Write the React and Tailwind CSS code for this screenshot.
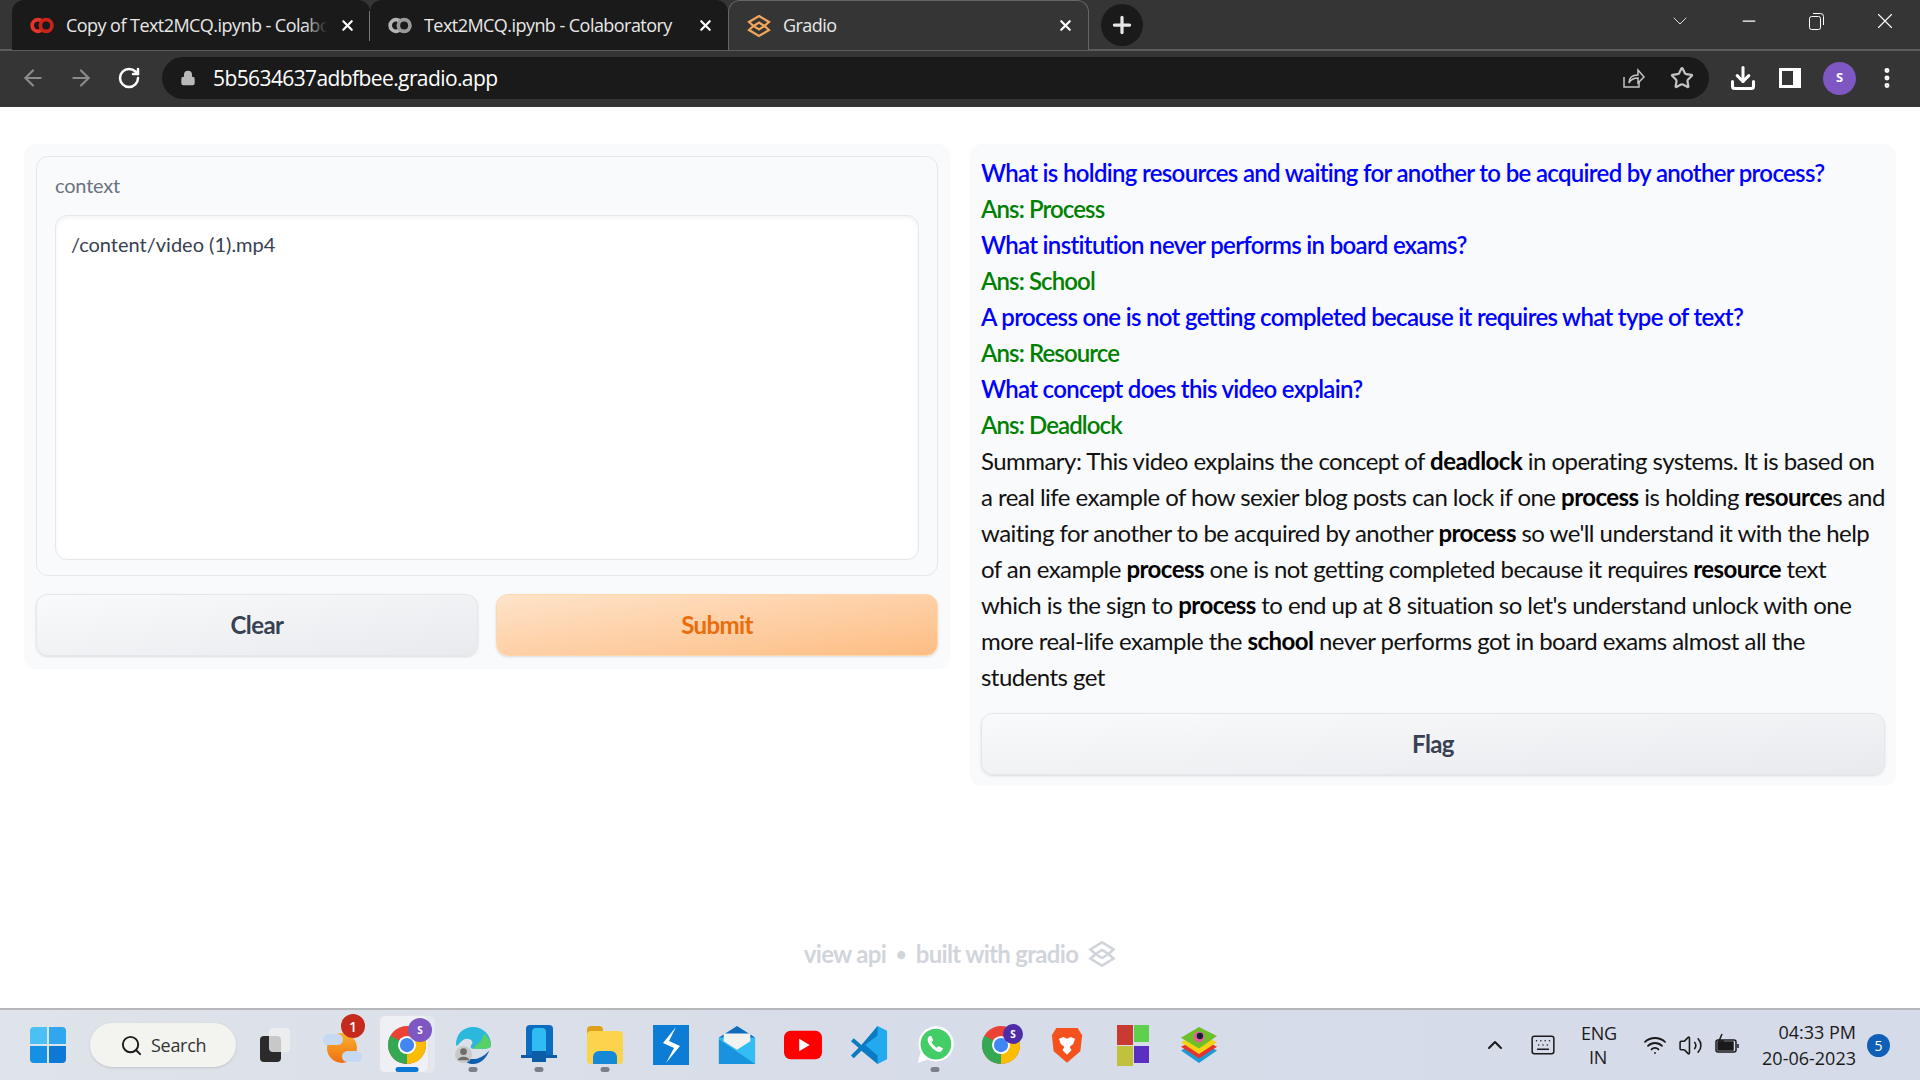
import React from "react";
import { ArrowLeft, ArrowRight, RotateCw, Lock, Star, Download, Plus, X, ChevronDown, Minus, ChevronUp, Wifi, Volume2, Keyboard, Search, MoreVertical } from "lucide-react";

const sans = "font-['Lato','Noto_Sans',sans-serif]";
const ui = "font-['Open_Sans','Noto_Sans',sans-serif]";

function ColabLogo({ color, dark }) {
  return (
    <svg width="26" height="17" viewBox="0 0 26 17" fill="none" strokeWidth="4">
      <path d="M13.500 4.500A6.300 6.300 0 1 0 13.500 12.500" stroke={color} />
      <circle cx="17.500" cy="8.500" r="6.300" stroke={dark} />
    </svg>
  );
}

function GradioLogo({ color, size = 24 }) {
  return (
    <svg width={size} height={size} viewBox="0 0 24 24" fill="none" stroke={color} strokeWidth="2.2" strokeLinejoin="miter">
      <path d="M12 2 22 8 17.500 12 22 16 12 22 2 16 6.500 12 2 8Z" />
      <path d="M12 8.500 17.500 12 12 15.500 6.500 12Z" />
    </svg>
  );
}

function Tab({ logo, title, active, divider, fade }) {
  return (
    <div className={`relative flex h-[50px] items-center pl-[18px] pr-[14px] gap-[12px] ${active ? "w-[361px] bg-[#353535] border border-b-0 border-[#666] rounded-t-xl" : "w-[358px] bg-[#1a1a1a] rounded-t-xl"}`}>
      <div className="w-[24px] flex justify-center shrink-0">{logo}</div>
      <div className={`relative flex-1 overflow-hidden whitespace-nowrap text-[18px] tracking-[-0.55px] text-[#e8e8e8] ${ui}`}>
        {title}
        {fade && <div className="absolute right-0 inset-y-0 w-[22px] bg-gradient-to-r from-transparent to-[#1a1a1a]" />}
      </div>
      <X size={17} strokeWidth={3} className="text-white shrink-0" />
      {divider && <div className="absolute right-0 top-[11px] h-[30px] w-px bg-[#777]" />}
    </div>
  );
}

function BrowserBar() {
  return (
    <header className="shrink-0 bg-[#353535] h-[107px]">
      <div className="flex items-start h-[51px] pl-[12px] border-b-2 border-[#5c5c5c]">
        <Tab title="Copy of Text2MCQ.ipynb - Colaboratory" logo={<ColabLogo color="#e8352a" dark="#c9231c" />} divider fade />
        <Tab title="Text2MCQ.ipynb - Colaboratory" logo={<ColabLogo color="#b4b4b4" dark="#9a9a9a" />} />
        <Tab title="Gradio" active logo={<GradioLogo color="#f2a65a" />} />
        <button className="ml-[12px] mt-[4px] w-[42px] h-[42px] rounded-full bg-[#1a1a1a] flex items-center justify-center">
          <Plus size={26} strokeWidth={3} className="text-[#e6e6e6]" />
        </button>
        <div className="ml-auto flex items-center h-[42px] text-white">
          <ChevronDown size={24} strokeWidth={1} className="text-[#ddd]" />
          <Minus size={20} strokeWidth={1.5} className="ml-[47px]" />
          <svg className="ml-[48px]" width="18" height="18" viewBox="0 0 18 18" fill="none" stroke="#fff" strokeWidth="1">
            <rect x="2.500" y="4.500" width="11" height="13" rx="2" />
            <path d="M6 1.500h7.500a3 3 0 0 1 3 3V13" />
          </svg>
          <X size={26} strokeWidth={1} className="ml-[47px] mr-[22px]" />
        </div>
      </div>
      <div className="flex items-center h-[54px] pl-[20px] pr-[20px]">
        <ArrowLeft size={26} strokeWidth={2} className="text-[#8b8b8b]" />
        <ArrowRight size={26} strokeWidth={2} className="ml-[22px] text-[#8b8b8b]" />
        <RotateCw size={24} strokeWidth={2.5} className="ml-[23px] text-white" />
        <div className="ml-[21px] flex-1 h-[42px] rounded-full bg-[#1a1a1a] flex items-center pl-[18px] pr-[15px]">
          <Lock size={16} fill="#b9b9b9" className="text-[#b9b9b9]" />
          <span className={`ml-[17px] text-[21px] tracking-[-0.6px] pt-[2px] text-white ${ui}`}>5b5634637adbfbee.gradio.app</span>
          <svg className="ml-auto" width="24" height="24" viewBox="0 0 24 24" fill="none" stroke="#c4c4c4" strokeWidth="1.5">
            <path d="M3 11v10h15v-5" />
            <path d="M8 17c0-5 3-8 9-8V4l6 7-6 6v-5c-4 0-7 1-9 5Z" />
          </svg>
          <Star size={24} strokeWidth={2.2} className="ml-[25px] text-[#c4c4c4]" />
        </div>
        <Download size={28} strokeWidth={2.6} className="ml-[20px] text-white" />
        <div className="ml-[22px] w-[22px] h-[20px] border-[3px] border-r-[8px] border-white" />
        <div className={`ml-[22px] w-[33px] h-[33px] rounded-full bg-[#7e57c2] text-white text-[13px] font-bold flex items-center justify-center ${ui}`}>S</div>
        <MoreVertical size={26} strokeWidth={2.6} className="ml-[18px] text-white" />
      </div>
    </header>
  );
}

function Btn({ children, tone }) {
  const tones = {
    gray: "bg-gradient-to-br from-[#f9fafb] to-[#e9eaee] border-[#e5e7eb] text-[#374151]",
    orange: "bg-gradient-to-br from-[#fee3c9] to-[#fdbd83] border-[#fed7aa] text-[#ea6c0a]",
  };
  return (
    <button className={`flex-1 h-[62px] rounded-xl border shadow-sm text-[24px] font-bold tracking-[-0.6px] ${sans} ${tones[tone]}`}>
      {children}
    </button>
  );
}

const B = ({ children }) => <b className="font-bold text-black">{children}</b>;

const qa = [
  ["What is holding resources and waiting for another to be acquired by another process?", "Ans: Process"],
  ["What institution never performs in board exams?", "Ans: School"],
  ["A process one is not getting completed because it requires what type of text?", "Ans: Resource"],
  ["What concept does this video explain?", "Ans: Deadlock"],
];

function Output() {
  return (
    <div className={`text-[24px] leading-[36px] tracking-[-0.54px] whitespace-nowrap text-[#111] ${sans}`}>
      {qa.map(([q, a]) => (
        <React.Fragment key={q}>
          <div className="text-[#0000ff] font-semibold tracking-[-0.68px]">{q}</div>
          <div className="text-[#008000] font-semibold tracking-[-0.9px]">{a}</div>
        </React.Fragment>
      ))}
      <div>Summary: This video explains the concept of <B>deadlock</B> in operating systems. It is based on</div>
      <div>a real life example of how sexier blog posts can lock if one <B>process</B> is holding <B>resource</B>s and</div>
      <div>waiting for another to be acquired by another <B>process</B> so we'll understand it with the help</div>
      <div>of an example <B>process</B> one is not getting completed because it requires <B>resource</B> text</div>
      <div>which is the sign to <B>process</B> to end up at 8 situation so let's understand unlock with one</div>
      <div>more real-life example the <B>school</B> never performs got in board exams almost all the</div>
      <div>students get</div>
    </div>
  );
}

function Dot({ wide }) {
  return <div className={`absolute left-1/2 -translate-x-1/2 bottom-0 h-[5px] rounded-full ${wide ? "w-[23px] bg-[#0a78d4]" : "w-[9px] bg-[#7b7f87]"}`} />;
}

function Cell({ children, dot, active }) {
  return (
    <div className="relative w-[66px] h-[54px] flex items-center justify-center">
      {active && (
        <>
          <div className="absolute left-[10px] right-[5px] top-[-2px] bottom-[-1px] bg-[#e4e7ee] rounded-md" />
          <div className="absolute left-[5px] right-[11px] top-[-3px] bottom-[-1px] bg-[#eef0f5] rounded-md border border-[#dfe2e8]" />
        </>
      )}
      <div className="relative">{children}</div>
      {dot && <Dot wide={active} />}
    </div>
  );
}

function Chrome({ badge, big }) {
  return (
    <div className="relative w-[38px] h-[38px]">
      <svg width="38" height="38" viewBox="0 0 40 40">
        <circle cx="20" cy="20" r="20" fill="#ea4335" />
        <path d="M20 20 2.700 10A20 20 0 0 0 20 40Z" fill="#34a853" />
        <path d="M20 20V40A20 20 0 0 0 37.300 10Z" fill="#fbbc04" />
        <circle cx="20" cy="20" r="9.500" fill="#fff" />
        <circle cx="20" cy="20" r="7.500" fill="#4285f4" />
      </svg>
      <div className={`absolute rounded-full ${big ? "w-[24px] h-[24px] -right-[6px] -top-[8px]" : "w-[20px] h-[20px] -right-[3px] -top-[2px]"} ${badge} text-white text-[10px] font-bold flex items-center justify-center ${ui}`}>S</div>
    </div>
  );
}

function Taskbar() {
  return (
    <footer className="shrink-0 h-[72px] border-t-2 border-[#b5b7ba] bg-gradient-to-r from-[#dfe4ea] via-[#d6dce8] to-[#d5dbe8] flex items-center relative">
      <div className="flex items-center">
        <div className="ml-[30px] w-[36px] grid grid-cols-2 gap-[2px]">
          <div className="h-[17px] rounded-tl-sm bg-[#4ac0f5]" />
          <div className="h-[17px] rounded-tr-sm bg-[#2fa6ee]" />
          <div className="h-[17px] rounded-bl-sm bg-[#1690e3]" />
          <div className="h-[17px] rounded-br-sm bg-[#0e78d5]" />
        </div>
        <div className={`ml-[24px] w-[146px] h-[44px] rounded-full bg-[#f3f4ef] shadow-sm flex items-center pl-[30px] gap-[8px] text-[18px] tracking-[-0.3px] text-[#333] ${ui}`}>
          <Search size={23} strokeWidth={2} className="text-[#1a1a1a]" />
          Search
        </div>
        <div className="ml-[6px] w-[66px] flex justify-center">
          <div className="relative w-[30px] h-[34px]">
            <div className="absolute left-0 bottom-0 w-[21px] h-[26px] rounded-sm bg-[#2b2b2b]" />
            <div className="absolute right-0 top-0 w-[21px] h-[24px] rounded-sm bg-[#f0f0f0]/80" />
          </div>
        </div>
        <Cell>
          <div className="relative w-[36px] h-[36px]">
            <div className="absolute left-[4px] top-[6px] w-[30px] h-[30px] rounded-full bg-gradient-to-b from-[#fbb02c] to-[#ee6f14]" />
            <div className="absolute left-0 top-[7px] w-[20px] h-[11px] rounded-full bg-[#c6d8f2]" />
            <div className="absolute right-[-3px] bottom-[1px] w-[20px] h-[11px] rounded-full bg-[#c6d8f2]" />
            <div className={`absolute right-[-6px] top-[-13px] w-[24px] h-[24px] rounded-full bg-[#c42b1c] text-white text-[14px] font-semibold flex items-center justify-center ${ui}`}>1</div>
          </div>
        </Cell>
        <Cell active dot><Chrome badge="bg-[#7e57c2]" big /></Cell>
        <Cell dot>
          <svg width="38" height="38" viewBox="0 0 38 40">
            <path d="M1 20C1 8 9 1 19 1c10 0 19 8 19 19 0 3-3 4-8 4H19c-3 0-3-3-1-5 2-3-3-7-8-5-5 2-7 9-9 6Z" fill="#2cb7dc" />
            <path d="M30 8c4 3 8 7 8 12 0 3-3 4-8 4H19c3-5 11-7 11-16Z" fill="#58d068" />
            <path d="M36 26c-3 8-9 14-17 14-6 0-9-3-9-8 6 4 16 5 26-6Z" fill="#0f5fae" />
            <circle cx="9" cy="30" r="9" fill="#c9c9c7" />
            <circle cx="9" cy="27" r="3.500" fill="#6d6d6d" />
            <path d="M3 36c0-5 12-5 12 0Z" fill="#6d6d6d" />
          </svg>
        </Cell>
        <Cell dot>
          <div className="relative w-[36px] h-[40px] flex justify-center">
            <div className="w-[27px] h-[30px] rounded-t-sm bg-[#0c6cc0]" />
            <div className="absolute top-[3px] w-[14px] h-[34px] bg-[#2fbcf2] rounded-sm" />
            <div className="absolute top-[26px] w-[14px] h-[11px] bg-[#0c5ca8]" />
            <div className="absolute top-[30px] w-[36px] h-[3px] bg-[#0c5ca8]" />
          </div>
        </Cell>
        <Cell dot>
          <div className="relative w-[36px] h-[38px]">
            <div className="absolute top-0 left-0 w-[16px] h-[10px] rounded-t-sm bg-[#dda21a]" />
            <div className="absolute top-[5px] inset-x-0 bottom-0 rounded-sm bg-[#fcd34d]" />
            <div className="absolute bottom-0 left-[6px] w-[24px] h-[13px] rounded-t-md bg-[#1688d8]" />
          </div>
        </Cell>
        <Cell>
          <svg width="36" height="40" viewBox="0 0 36 40">
            <rect width="36" height="40" fill="#0c7cd5" />
            <path d="M23 2 10 18l11 5-8 15 14-17-11-5Z" fill="#fff" />
          </svg>
        </Cell>
        <Cell>
          <svg width="38" height="38" viewBox="0 0 40 40">
            <path d="M1 12 20 0l19 12v28H1Z" fill="#0f6cbd" />
            <path d="M1 12h38v28H1Z" fill="#33bdf2" />
            <path d="M6 8h28v8L20 25 6 16Z" fill="#f2f2f2" />
            <path d="M1 14 39 40H1Z" fill="#1a93de" />
          </svg>
        </Cell>
        <Cell>
          <svg width="38" height="30" viewBox="0 0 40 30">
            <rect width="40" height="30" rx="7" fill="#f00" />
            <path d="M16 8.500 27 15 16 21.500Z" fill="#fff" />
          </svg>
        </Cell>
        <Cell>
          <svg width="38" height="40" viewBox="0 0 40 42">
            <path d="M29 1 39 6v30L29 41 12 24 29 1Z" fill="#23a9ee" />
            <path d="M29 1 12 21 4 14 1 17l8 7-8 8 3 3 8-8 17 14v-9L16 21 29 11Z" fill="#0b7cc4" />
          </svg>
        </Cell>
        <Cell dot>
          <svg width="38" height="40" viewBox="0 0 42 42">
            <path d="M2 41 5 29A19.500 19.500 0 1 1 13 37Z" fill="#fff" />
            <circle cx="22" cy="20" r="17" fill="#43cd66" />
            <path d="M15 11c-3 2-3 6 1 11s9 8 12 6l2-3-5-3-2 2c-2-1-5-4-6-6l2-2-2-5Z" fill="#fff" />
          </svg>
        </Cell>
        <Cell><Chrome badge="bg-[#4f2ca8]" /></Cell>
        <Cell>
          <svg width="32" height="40" viewBox="0 0 36 42">
            <path d="M6 2h24l5 8-2 18-15 13L3 28 1 10Z" fill="#f4511e" />
            <path d="M9 14l5-2 4 2 4-2 5 2-2 6-4 3 2 4-5 5-5-5 2-4-4-3Z" fill="#fff" />
          </svg>
        </Cell>
        <Cell>
          <div className="grid grid-cols-2 w-[32px] gap-[1px]">
            <div className="h-[20px] bg-[#c93a32]" />
            <div className="h-[17px] bg-[#5fcf4e]" />
            <div className="h-[20px] bg-[#bfc23a]" />
            <div className="h-[17px] bg-[#5a2fc2]" />
          </div>
        </Cell>
        <Cell>
          <svg width="36" height="36" viewBox="0 0 40 40">
            <path d="M20 16 40 26 20 40 0 26Z" fill="#1a9ad6" />
            <path d="M20 12 40 22 20 35 0 22Z" fill="#e8322e" />
            <path d="M20 8 40 17 20 30 0 17Z" fill="#f5d313" />
            <path d="M20 0 40 10 20 24 0 12Z" fill="#6ec02b" />
            <circle cx="20" cy="11" r="6" fill="#e85c9c" />
            <circle cx="21" cy="10" r="3.500" fill="#123" />
          </svg>
        </Cell>
      </div>
      <div className={`ml-auto flex items-center text-[#1a1a1a] ${ui}`}>
        <ChevronUp size={24} strokeWidth={2} />
        <Keyboard size={26} strokeWidth={1.4} className="ml-[23px]" />
        <div className="ml-[25px] w-[34px] text-center text-[18px] leading-[24px] tracking-[-0.3px]">ENG<br />IN</div>
        <Wifi size={24} strokeWidth={1.8} className="ml-[28px]" />
        <Volume2 size={25} strokeWidth={1.5} className="ml-[11px]" />
        <svg className="ml-[11px]" width="26" height="24" viewBox="0 0 26 24" fill="none" stroke="#1a1a1a" strokeWidth="1.5">
          <rect x="2" y="7" width="20" height="12" rx="2" />
          <rect x="4" y="9" width="15" height="8" fill="#1a1a1a" />
          <path d="M24 11v4" />
          <path d="M8 1 5 8h4l-2 5" />
        </svg>
        <div className="ml-[22px] text-right text-[18px] leading-[26px]">04:33 PM<br />20-06-2023</div>
        <div className="ml-[11px] mr-[30px] w-[23px] h-[23px] rounded-full bg-[#0f5fb8] text-white text-[14px] flex items-center justify-center">5</div>
      </div>
    </footer>
  );
}

export default function App() {
  return (
    <div className="w-[1920px] h-[1080px] flex flex-col overflow-hidden bg-white">
      <BrowserBar />
      <main className="flex-1 flex flex-col pl-[24px] pr-[24px] pt-[37px] pb-[36px]">
        <div className="flex items-start gap-[20px]">
          <section className="w-[926px] bg-[#f9fafb] rounded-xl pt-[12px] px-[12px] pb-[13px]">
            <div className="border border-[#e5e7eb] rounded-xl px-[18px] pt-[13px] pb-[15px] bg-[#f9fafb]">
              <div className={`text-[20px] leading-[30px] tracking-[-0.2px] text-[#6b7280] ${sans}`}>context</div>
              <div className={`mt-[15px] h-[345px] bg-white border border-[#e5e7eb] rounded-xl px-[15px] py-[13px] text-[20px] leading-[30px] text-[#374151] shadow-inner ${sans}`}>
                /content/video (1).mp4
              </div>
            </div>
            <div className="flex gap-[18px] mt-[18px]">
              <Btn tone="gray">Clear</Btn>
              <Btn tone="orange">Submit</Btn>
            </div>
          </section>
          <section className="w-[926px] bg-[#f9fafb] rounded-xl px-[11px] pt-[11px] pb-[11px]">
            <Output />
            <div className="flex mt-[18px]">
              <Btn tone="gray">Flag</Btn>
            </div>
          </section>
        </div>
        <div className={`mt-auto flex items-center justify-center gap-[10px] text-[24px] font-bold tracking-[-0.7px] text-[#d1d5db] ${sans}`}>
          <span>view api</span>
          <span className="text-[18px]">•</span>
          <span>built with gradio</span>
          <GradioLogo color="#d1d5db" size={28} />
        </div>
      </main>
      <Taskbar />
    </div>
  );
}
